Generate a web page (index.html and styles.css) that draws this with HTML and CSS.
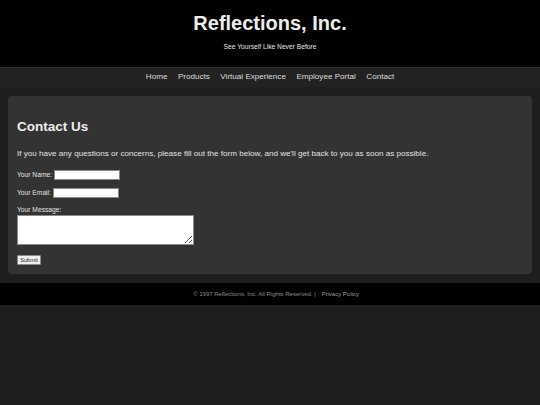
FILE: index.html
```html
<!DOCTYPE html>
<html lang="en">
<head>
<meta charset="utf-8">
<title>Contact Us - Reflections, Inc.</title>
<link rel="stylesheet" href="styles.css">
</head>
<body>
<header class="site-header">
  <h1 class="site-title">Reflections, Inc.</h1>
  <p class="tagline">See Yourself Like Never Before</p>
</header>
<nav class="site-nav">
  <a href="#">Home</a>
  <a href="#">Products</a>
  <a href="#">Virtual Experience</a>
  <a href="#">Employee Portal</a>
  <a href="#">Contact</a>
</nav>
<main class="content">
  <h2 class="page-title">Contact Us</h2>
  <p class="intro">If you have any questions or concerns, please fill out the form below, and we'll get back to you as soon as possible.</p>
  <form class="contact-form">
    <div class="field-inline">
      <label for="name">Your Name:</label>
      <input type="text" id="name" class="text-input name-input">
    </div>
    <div class="field-inline">
      <label for="email">Your Email:</label>
      <input type="email" id="email" class="text-input">
    </div>
    <div class="field-block">
      <label for="message">Your Message:</label>
      <textarea id="message" class="message-input"></textarea>
    </div>
    <button type="button" class="submit-btn">Submit</button>
  </form>
</main>
<footer class="site-footer">
  <p>© 1997 Reflections, Inc. All Rights Reserved. | <a href="#" class="footer-link">Privacy Policy</a></p>
</footer>
</body>
</html>
```

FILE: styles.css
```css
html, body {
  margin: 0;
  padding: 0;
}
body {
  background: #1e1e1e;
  font-family: "Liberation Sans", Arial, sans-serif;
  color: #e2e2e2;
  font-size: 6.7px;
}
.site-header {
  background: #000;
  text-align: center;
  padding: 11px 0 16px;
}
.site-title {
  margin: 0;
  font-size: 20px;
  line-height: 24px;
  font-weight: bold;
  color: #ececec;
}
.tagline {
  margin: 8px 0 0;
  font-size: 6.7px;
  line-height: 8px;
  color: #e6e6e6;
}
.site-nav {
  background: #222;
  border-top: 1px solid #2a2a2a;
  box-sizing: border-box;
  height: 20px;
  padding: 4px 0 5px;
  display: flex;
  justify-content: center;
  gap: 10.5px;
  font-size: 8.1px;
  line-height: 10px;
}
.site-nav a {
  color: #dcdcdc;
  text-decoration: none;
}
.content {
  background: #333;
  margin: 9px 8px 9px;
  border-radius: 4px;
  padding: 9px;
}
.page-title {
  margin: 14px 0 0;
  font-size: 13.5px;
  line-height: 15px;
  font-weight: bold;
  color: #eeeeee;
}
.intro {
  margin: 15px 0 0;
  font-size: 8.1px;
  line-height: 9px;
  color: #e2e2e2;
}
.contact-form {
  margin-top: 12px;
}
.field-inline {
  display: flex;
  align-items: center;
  gap: 2px;
  height: 10px;
  margin-bottom: 8px;
}
.field-inline label,
.field-block label {
  font-size: 6.7px;
  line-height: 8px;
  color: #e2e2e2;
}
.text-input {
  box-sizing: border-box;
  width: 66px;
  height: 10px;
  margin: 0;
  padding: 0 2px;
  border: 1px solid #8a8a8a;
  background: #fff;
  font-size: 6px;
}
.field-block {
  margin-top: 8px;
}
.field-block label {
  display: block;
  margin-bottom: 1px;
}
.message-input {
  display: block;
  box-sizing: border-box;
  width: 177px;
  height: 30px;
  margin: 0;
  padding: 1px;
  border: 1px solid #8a8a8a;
  background: #fff;
  font-size: 6px;
}
.submit-btn {
  display: block;
  margin-top: 10px;
  box-sizing: border-box;
  width: 24px;
  height: 10px;
  padding: 0;
  border: 1px solid #8a8a8a;
  border-radius: 1px;
  background: #efefef;
  color: #222;
  font-family: "Liberation Sans", Arial, sans-serif;
  font-size: 5.6px;
  line-height: 8px;
}
.site-footer {
  background: #000;
  height: 22px;
  display: flex;
  align-items: center;
  justify-content: center;
  padding-left: 12px;
}
.site-footer p {
  margin: 0;
  font-size: 6px;
  line-height: 8px;
  color: #8c8c8c;
}
.footer-link {
  color: #9a9a9a;
  text-decoration: none;
  margin-left: 4px;
}
```
